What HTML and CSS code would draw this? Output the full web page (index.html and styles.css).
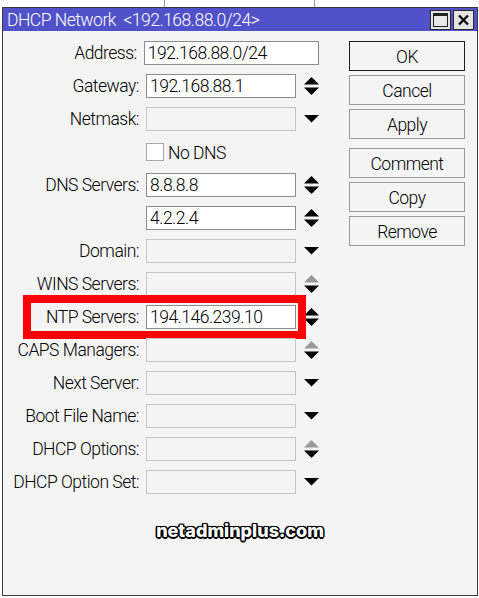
FILE: index.html
```html
<!DOCTYPE html>
<html>
<head>
<meta charset="utf-8">
<link rel="stylesheet" href="styles.css">
</head>
<body>
<div class="window">
  <div class="titlebar">
    <span class="title">DHCP Network &nbsp;&lt;192.168.88.0/24&gt;</span>
    <div class="tbtns">
      <span class="tbtn">
        <svg width="19" height="18" viewBox="0 0 19 18"><rect x="2.5" y="2.5" width="14" height="13" fill="#e8e8e8" stroke="#222" stroke-width="1"/><rect x="2" y="2" width="15" height="3" fill="#222"/></svg>
      </span>
      <span class="tbtn">
        <svg width="19" height="18" viewBox="0 0 19 18"><path d="M5 4.5 L14 13.5 M14 4.5 L5 13.5" stroke="#111" stroke-width="2.4" fill="none"/></svg>
      </span>
    </div>
  </div>
  <div class="content">
    <div class="form">
      <div class="row"><span class="label">Address:</span><span class="field wide">192.168.88.0/24</span></div>
      <div class="row"><span class="label">Gateway:</span><span class="field">192.168.88.1</span><span class="arrow"><svg width="15" height="18" viewBox="0 0 15 18"><path d="M0 7.5 L7.5 0 L15 7.5 Z" fill="#000"/><path d="M0 10.5 L15 10.5 L7.5 18 Z" fill="#000"/></svg></span></div>
      <div class="row"><span class="label">Netmask:</span><span class="field off"></span><span class="arrow"><svg width="15" height="8" viewBox="0 0 15 8"><path d="M0 0 L15 0 L7.5 7.5 Z" fill="#000"/></svg></span></div>
      <div class="row"><span class="label"></span><span class="check"></span><span class="checktext">No DNS</span></div>
      <div class="row"><span class="label">DNS Servers:</span><span class="field">8.8.8.8</span><span class="arrow"><svg width="15" height="18" viewBox="0 0 15 18"><path d="M0 7.5 L7.5 0 L15 7.5 Z" fill="#000"/><path d="M0 10.5 L15 10.5 L7.5 18 Z" fill="#000"/></svg></span></div>
      <div class="row"><span class="label"></span><span class="field">4.2.2.4</span><span class="arrow"><svg width="15" height="18" viewBox="0 0 15 18"><path d="M0 7.5 L7.5 0 L15 7.5 Z" fill="#000"/><path d="M0 10.5 L15 10.5 L7.5 18 Z" fill="#000"/></svg></span></div>
      <div class="row"><span class="label">Domain:</span><span class="field off"></span><span class="arrow"><svg width="15" height="8" viewBox="0 0 15 8"><path d="M0 0 L15 0 L7.5 7.5 Z" fill="#000"/></svg></span></div>
      <div class="row"><span class="label">WINS Servers:</span><span class="field off"></span><span class="arrow"><svg width="15" height="18" viewBox="0 0 15 18"><path d="M0 7.5 L7.5 0 L15 7.5 Z" fill="#9a9a9a"/><path d="M0 10.5 L15 10.5 L7.5 18 Z" fill="#000"/></svg></span></div>
      <div class="row ntp"><span class="label">NTP Servers:</span><span class="field">194.146.239.10</span><span class="arrow"><svg width="15" height="18" viewBox="0 0 15 18"><path d="M0 7.5 L7.5 0 L15 7.5 Z" fill="#000"/><path d="M0 10.5 L15 10.5 L7.5 18 Z" fill="#000"/></svg></span><span class="highlight"></span></div>
      <div class="row"><span class="label">CAPS Managers:</span><span class="field off"></span><span class="arrow"><svg width="15" height="18" viewBox="0 0 15 18"><path d="M0 7.5 L7.5 0 L15 7.5 Z" fill="#9a9a9a"/><path d="M0 10.5 L15 10.5 L7.5 18 Z" fill="#000"/></svg></span></div>
      <div class="row"><span class="label">Next Server:</span><span class="field off"></span><span class="arrow"><svg width="15" height="8" viewBox="0 0 15 8"><path d="M0 0 L15 0 L7.5 7.5 Z" fill="#000"/></svg></span></div>
      <div class="row"><span class="label">Boot File Name:</span><span class="field off"></span><span class="arrow"><svg width="15" height="8" viewBox="0 0 15 8"><path d="M0 0 L15 0 L7.5 7.5 Z" fill="#000"/></svg></span></div>
      <div class="row"><span class="label">DHCP Options:</span><span class="field off"></span><span class="arrow"><svg width="15" height="18" viewBox="0 0 15 18"><path d="M0 7.5 L7.5 0 L15 7.5 Z" fill="#9a9a9a"/><path d="M0 10.5 L15 10.5 L7.5 18 Z" fill="#000"/></svg></span></div>
      <div class="row"><span class="label">DHCP Option Set:</span><span class="field off"></span><span class="arrow"><svg width="15" height="8" viewBox="0 0 15 8"><path d="M0 0 L15 0 L7.5 7.5 Z" fill="#000"/></svg></span></div>
    </div>
    <div class="buttons">
      <div class="btn default">OK</div>
      <div class="btn">Cancel</div>
      <div class="btn">Apply</div>
      <div class="btn sep">Comment</div>
      <div class="btn">Copy</div>
      <div class="btn">Remove</div>
    </div>
  </div>
  <div class="watermark">netadminplus.com</div>
</div>
</body>
</html>
```
FILE: styles.css
```css
html, body {
  margin: 0;
  padding: 0;
}
body {
  width: 479px;
  height: 598px;
  overflow: hidden;
  background:
    linear-gradient(#9a9a9a, #9a9a9a) 164px 0 / 1px 7px no-repeat,
    linear-gradient(#9a9a9a, #9a9a9a) 314px 0 / 1px 7px no-repeat,
    #ffffff;
  font-family: Roboto, "Liberation Sans", sans-serif;
  font-weight: 300;
  font-size: 17.5px;
  letter-spacing: -0.5px;
  color: #000;
}
.window {
  box-sizing: border-box;
  margin: 7px 0 0 2px;
  width: 476px;
  height: 589px;
  border: 1px solid #3c3c3c;
  background: #f4f4f4;
}
.titlebar {
  height: 23px;
  background: #5151c9;
  color: #fff;
  display: flex;
  align-items: center;
  justify-content: space-between;
  padding: 0 3px 0 4px;
}
.title {
  white-space: pre;
  padding-top: 1px;
}
.tbtns {
  display: flex;
  gap: 2px;
}
.tbtn {
  box-sizing: border-box;
  width: 21px;
  height: 20px;
  background: #e4e4e4;
  border: 1px solid #2a2a2a;
  display: flex;
  align-items: center;
  justify-content: center;
}
.tbtn svg { display: block; }
.content {
  display: flex;
  padding-top: 10px;
}
.form {
  display: flex;
  flex-direction: column;
  gap: 9px;
  width: 316px;
}
.row {
  position: relative;
  display: flex;
  align-items: center;
  height: 24px;
}
.label {
  box-sizing: border-box;
  width: 136px;
  height: 24px;
  margin-right: 7px;
  text-align: right;
  white-space: nowrap;
  line-height: 23px;
  padding-top: 1px;
}
.field {
  box-sizing: border-box;
  width: 150px;
  height: 24px;
  border: 1px solid #8c8c8c;
  background: #fff;
  padding: 1px 0 0 3px;
  line-height: 21px;
  white-space: nowrap;
}
.field.wide { width: 178px; }
.field.off {
  background: #f4f4f4;
  border-color: #c4c4c4;
}
.arrow {
  margin-left: 8px;
  width: 15px;
  display: flex;
  align-items: center;
  justify-content: center;
}
.arrow svg { display: block; }
.check {
  box-sizing: border-box;
  width: 18px;
  height: 18px;
  border: 1px solid #a8a8a8;
  background: #fff;
}
.checktext {
  margin-left: 4px;
  padding-top: 1px;
}
.highlight {
  position: absolute;
  left: 20px;
  top: -10px;
  width: 283px;
  height: 44px;
  box-sizing: border-box;
  border: 8px solid #ff0000;
}
.buttons {
  margin-left: 30px;
  display: flex;
  flex-direction: column;
  gap: 4px;
  width: 116px;
}
.btn {
  box-sizing: border-box;
  height: 30px;
  border: 1px solid #9a9a9a;
  background: #f4f4f4;
  display: flex;
  align-items: center;
  justify-content: center;
  padding-top: 1px;
}
.btn.default { border-color: #1e1e1e; }
.btn.sep { margin-top: 5px; }
.watermark {
  margin-top: 26px;
  text-align: center;
  font-family: Inter, "Open Sans", sans-serif;
  font-weight: 800;
  font-size: 18px;
  letter-spacing: 0;
  color: #fff;
  text-shadow:
    -1.5px 0 0 #000, 1.5px 0 0 #000, 0 -1.5px 0 #000, 0 1.5px 0 #000,
    -1.2px -1.2px 0 #000, 1.2px -1.2px 0 #000, -1.2px 1.2px 0 #000, 1.2px 1.2px 0 #000,
    0 0 2px #000;
}
```
